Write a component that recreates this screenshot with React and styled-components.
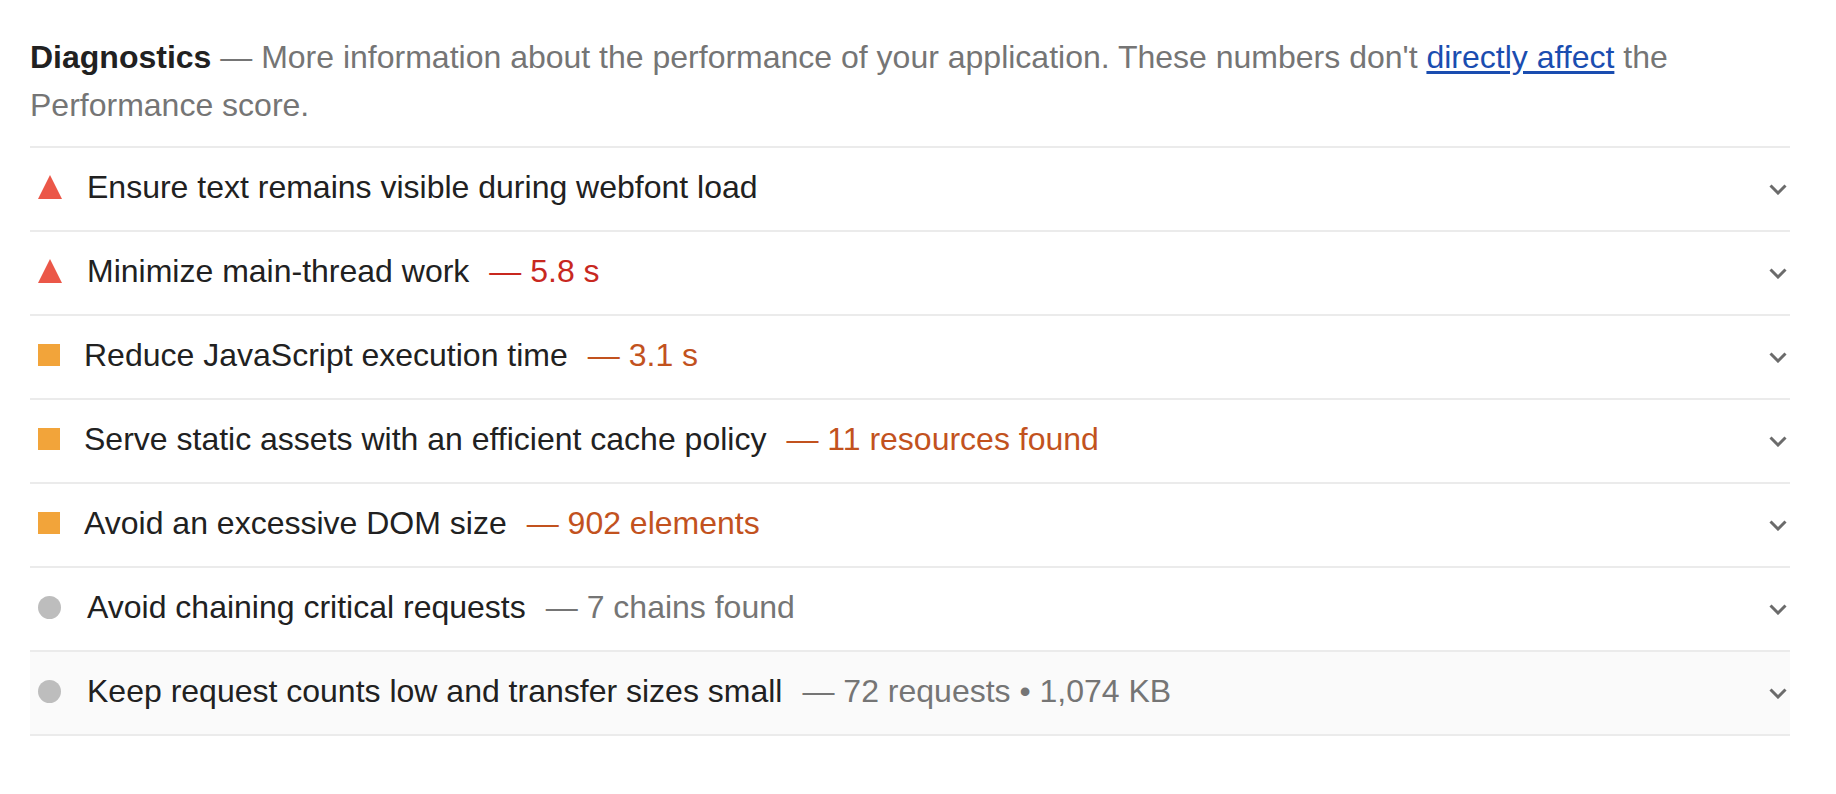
import React from "react";
import styled, { createGlobalStyle } from "styled-components";

const GlobalStyle = createGlobalStyle`
  body {
    margin: 0;
    background: #ffffff;
    font-family: "Liberation Sans", Helvetica, Arial, sans-serif;
  }
`;

// Estilos
const Page = styled.div`
  padding: 33px 46px 40px 30px;
`;

const Header = styled.div`
  font-size: 32px;
  line-height: 48px;
  color: #757575;
  margin-bottom: 17px;
  padding-right: 4px;
`;

const HeaderTitle = styled.span`
  font-weight: bold;
  color: #212121;
`;

const Link = styled.a`
  color: #1a4db0;
  text-decoration: underline;
  text-underline-offset: 3px;
`;

const List = styled.div`
  border-bottom: 2px solid #ebebeb;
`;

const Row = styled.div`
  display: flex;
  align-items: center;
  box-sizing: border-box;
  height: 84px;
  padding: 0 3px 4px 8px;
  border-top: 2px solid #ebebeb;
  background: ${(p) => (p.$hover ? "#fafafa" : "transparent")};
  font-size: 32px;
`;

const Triangle = styled.svg`
  width: 24px;
  height: 24px;
  margin-right: 25px;
  flex-shrink: 0;
`;

const Square = styled.span`
  width: 22px;
  height: 22px;
  margin-right: 24px;
  background: #f2a43a;
  flex-shrink: 0;
`;

const Circle = styled.span`
  width: 23px;
  height: 23px;
  border-radius: 50%;
  margin-right: 26px;
  background: #bdbdbd;
  flex-shrink: 0;
`;

const Title = styled.span`
  color: #212121;
`;

const Value = styled.span`
  margin-left: 20px;
  color: ${(p) => p.$color};
`;

const Spacer = styled.span`
  flex: 1;
`;

const Chevron = styled.svg`
  width: 18px;
  height: 11px;
  margin-top: 4px;
  flex-shrink: 0;
`;

const colors = {
  fail: "#c8281f",
  average: "#c2521e",
  info: "#757575",
};

// Dados
const audits = [
  { kind: "fail", title: "Ensure text remains visible during webfont load" },
  { kind: "fail", title: "Minimize main-thread work", value: "— 5.8 s" },
  { kind: "average", title: "Reduce JavaScript execution time", value: "— 3.1 s" },
  { kind: "average", title: "Serve static assets with an efficient cache policy", value: "— 11 resources found" },
  { kind: "average", title: "Avoid an excessive DOM size", value: "— 902 elements" },
  { kind: "info", title: "Avoid chaining critical requests", value: "— 7 chains found" },
  { kind: "info", title: "Keep request counts low and transfer sizes small", value: "— 72 requests • 1,074 KB", hover: true },
];

const Icon = ({ kind }) => {
  if (kind === "fail") {
    return (
      <Triangle viewBox="0 0 24 24">
        <polygon points="12,0 24,24 0,24" fill="#eb5748" />
      </Triangle>
    );
  }
  if (kind === "average") return <Square />;
  return <Circle />;
};

const App = () => {
  return (
    <Page>
      <GlobalStyle />
      <Header>
        <HeaderTitle>Diagnostics</HeaderTitle> — More information about the performance of your
        application. These numbers don't <Link href="#">directly affect</Link> the Performance score.
      </Header>
      <List>
        {audits.map((audit, index) => (
          <Row key={index} $hover={audit.hover}>
            <Icon kind={audit.kind} />
            <Title>{audit.title}</Title>
            {audit.value && <Value $color={colors[audit.kind]}>{audit.value}</Value>}
            <Spacer />
            <Chevron viewBox="0 0 18 11">
              <polyline points="1.5,1.5 9,9 16.5,1.5" fill="none" stroke="#6b6b6b" strokeWidth="3" />
            </Chevron>
          </Row>
        ))}
      </List>
    </Page>
  );
};

export default App;
